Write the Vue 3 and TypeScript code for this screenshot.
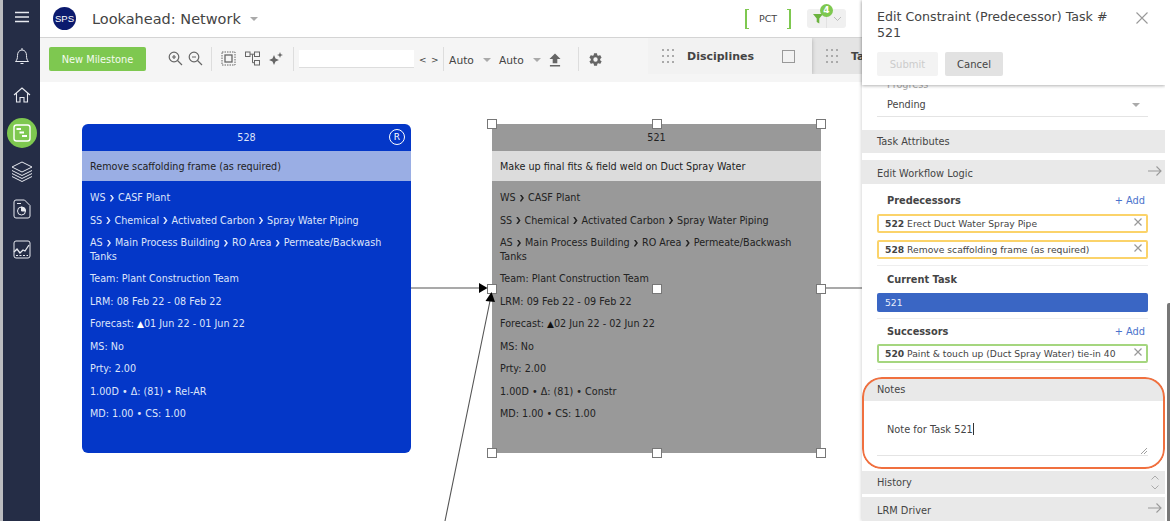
<script setup lang="ts">
interface TaskNode {
  id: string
  title: string
  lines: string[][]
  forecast: string
  lrm: string
  last: string
  selected: boolean
}

const handles = [
  [0, 0], [50, 0], [100, 0],
  [0, 50], [50, 50], [100, 50],
  [0, 100], [50, 100], [100, 100],
]

const paths = [
  ['WS', 'CASF Plant'],
  ['SS', 'Chemical', 'Activated Carbon', 'Spray Water Piping'],
  ['AS', 'Main Process Building', 'RO Area', 'Permeate/Backwash Tanks'],
]

const nodes: TaskNode[] = [
  {
    id: '528',
    title: 'Remove scaffolding frame (as required)',
    lines: paths,
    lrm: 'LRM: 08 Feb 22 - 08 Feb 22',
    forecast: '01 Jun 22 - 01 Jun 22',
    last: '1.00D • Δ: (81) • Rel-AR',
    selected: false,
  },
  {
    id: '521',
    title: 'Make up final fits & field weld on Duct Spray Water',
    lines: paths,
    lrm: 'LRM: 09 Feb 22 - 09 Feb 22',
    forecast: '02 Jun 22 - 02 Jun 22',
    last: '1.00D • Δ: (81) • Constr',
    selected: true,
  },
]
</script>

<template>
  <div class="app">
    <div class="edge"></div>
    <nav class="rail">
      <svg class="rail-menu" width="16" height="12" viewBox="0 0 16 12"><path d="M1 1.5h14M1 6h14M1 10.500h14" stroke="#e8eaf0" stroke-width="1.600" fill="none" /></svg>
      <svg class="rail-icon bell" width="16" height="20" viewBox="0 0 16 20" fill="none" stroke="#e8eaf0" stroke-width="1"><path d="M1.500 14.500c1.500-1.500 2-3 2-6s1.500-5.500 4.500-5.500 4.500 2.500 4.500 5.500.5 4.500 2 6zM8 1v2M6.500 16.500h3" /></svg>
      <svg class="rail-icon home" width="18" height="16" viewBox="0 0 18 16" fill="none" stroke="#e8eaf0" stroke-width="1.100"><path d="M1 8l8-7 8 7M3.500 6.500V15h3.500v-4.500h4V15h3.500V6.500" /></svg>
      <div class="rail-active">
        <svg width="20" height="20" viewBox="0 0 20 20" fill="none" stroke="#fff" stroke-width="1.400"><rect x="2" y="2" width="16" height="16" rx="2.500" /><path d="M4.500 6h4.500M7.500 9.500h4.500M10 13h5" stroke-width="1.800" /></svg>
      </div>
      <svg class="rail-icon layers" width="24" height="22" viewBox="0 0 24 22" fill="none" stroke="#e8eaf0" stroke-width="1"><path d="M12 1l10 5-10 5L2 6zM2 9.500l10 5 10-5M2 12.500l10 5 10-5M2 15.500l10 5 10-5" /></svg>
      <svg class="rail-icon report" width="18" height="20" viewBox="0 0 18 20" fill="none" stroke="#e8eaf0" stroke-width="1"><path d="M3 1h8.500L17 6.500V17a2 2 0 0 1-2 2H3a2 2 0 0 1-2-2V3a2 2 0 0 1 2-2z" /><circle cx="8.500" cy="12" r="4" /><path d="M4 4.500h4" /><path d="M8.500 12V8a4 4 0 0 1 4 4z" fill="#e8eaf0" /></svg>
      <svg class="rail-icon chart" width="18" height="19" viewBox="0 0 18 19" fill="none" stroke="#e8eaf0" stroke-width="1"><rect x="1" y="1" width="16" height="17" rx="2" /><path d="M1 12l3-3 3 4 3-3 2 1 4-6" stroke-width="1.300" /><path d="M3 15.500h12" stroke-dasharray="2 1.500" /></svg>
    </nav>

    <main class="main">
      <header class="topbar">
        <div class="logo">SPS</div>
        <div class="page-title">Lookahead: Network</div>
        <span class="caret title-caret"></span>
        <div class="spacer"></div>
        <div class="pct">PCT</div>
        <div class="filter">
          <svg width="10" height="11" viewBox="0 0 10 11"><path d="M0 1h10L6.300 5.500V10.500L3.700 9V5.500z" fill="#6cb33f" /></svg>
          <span class="filter-badge">4</span>
          <i class="filter-sep"></i>
          <svg width="9" height="6" viewBox="0 0 9 6"><path d="M1 1l3.500 3.500L8 1" stroke="#bbb" fill="none" /></svg>
        </div>
      </header>

      <div class="toolbar">
        <button class="milestone">New Milestone</button>
        <svg class="tool first" width="15" height="15" viewBox="0 0 15 15" fill="none" stroke="#666" stroke-width="1.200"><circle cx="6" cy="6" r="4.800" /><path d="M9.500 9.500L14 14M4 6h4M6 4v4" /></svg>
        <svg class="tool" width="15" height="15" viewBox="0 0 15 15" fill="none" stroke="#666" stroke-width="1.200"><circle cx="6" cy="6" r="4.800" /><path d="M9.500 9.500L14 14M4 6h4" /></svg>
        <i class="tool-sep sep-zoom"></i>
        <svg class="tool" width="15" height="15" viewBox="0 0 15 15" fill="none" stroke="#666"><rect x="1" y="1" width="13" height="13" stroke-dasharray="1.500 1" /><rect x="4" y="4" width="7" height="7" stroke-width="1.300" /></svg>
        <svg class="tool graph" width="15" height="15" viewBox="0 0 15 15" fill="none" stroke="#666"><rect x="0.500" y="1" width="4.500" height="4.500" /><rect x="9.500" y="1" width="5" height="4.500" /><rect x="9.500" y="9.500" width="5" height="4.500" /><path d="M5 3.200h4.500M7.500 3.200v8.500h2" /></svg>
        <svg class="tool spark" width="14" height="14" viewBox="0 0 14 14" fill="#666"><path d="M5 3l1.500 3.500L10 8 6.500 9.500 5 13 3.500 9.500 0 8l3.500-1.500zM11 0l.8 2.200L14 3l-2.200.8L11 6l-.8-2.200L8 3l2.200-.8z" /></svg>
        <i class="tool-sep sep-tools"></i>
        <div class="search"></div>
        <span class="pager">&lt;</span>
        <span class="pager">&gt;</span>
        <i class="tool-sep sep-pager"></i>
        <span class="auto">Auto</span><span class="caret"></span>
        <span class="auto">Auto</span><span class="caret"></span>
        <svg class="upload" width="12" height="14" viewBox="0 0 13 14" fill="#666"><path d="M6.500 0L12.500 6H9v4.500H4V6H.5zM1 12.500h11V14H1z" /></svg>
        <i class="tool-sep sep-gear"></i>
        <svg class="gear" width="15" height="15" viewBox="0 0 24 24"><path fill="#666" d="M19.400 13c.04-.33.1-.66.1-1s-.06-.67-.1-1l2.100-1.650c.2-.15.25-.42.12-.64l-2-3.460c-.12-.22-.39-.3-.61-.22l-2.490 1c-.52-.4-1.080-.73-1.690-.98l-.38-2.650A.5.500 0 0 0 14 2h-4a.5.500 0 0 0-.5.420l-.38 2.650c-.61.250-1.170.590-1.690.98l-2.490-1a.5.500 0 0 0-.61.220l-2 3.460c-.13.220-.07.490.12.640L4.600 11c-.04.330-.1.660-.1 1s.06.670.1 1l-2.100 1.650c-.2.150-.25.420-.12.640l2 3.460c.12.220.39.300.61.220l2.490-1c.52.400 1.080.730 1.690.980l.38 2.650c.03.240.24.420.5.420h4c.26 0 .47-.18.500-.42l.38-2.650c.61-.25 1.170-.59 1.690-.98l2.490 1c.23.090.49 0 .61-.22l2-3.460c.12-.22.07-.49-.12-.64zM12 15.500a3.500 3.500 0 1 1 0-7 3.500 3.500 0 0 1 0 7z" /></svg>
      </div>

      <div class="dock">
        <div class="dock-tab">
          <span class="grip"><i v-for="n in 9" :key="n"></i></span>
          <b>Disciplines</b>
          <span class="check"></span>
        </div>
        <div class="dock-tab off">
          <span class="grip"><i v-for="n in 9" :key="n"></i></span>
          <b>Tasks</b>
        </div>
      </div>

      <section class="canvas">
        <article
          v-for="node in nodes"
          :key="node.id"
          class="node"
          :class="{ selected: node.selected }"
        >
          <div class="node-id">
            {{ node.id }}
            <span v-if="!node.selected" class="node-badge">R</span>
          </div>
          <div class="node-title">{{ node.title }}</div>
          <div class="node-body">
            <p v-for="line in node.lines" :key="line[0]">
              <template v-for="(part, i) in line" :key="part">
                <i v-if="i" class="chev"></i>{{ part }}
              </template>
            </p>
            <p>Team: Plant Construction Team</p>
            <p>{{ node.lrm }}</p>
            <p>Forecast: <span class="tri">▲</span>{{ node.forecast }}</p>
            <p>MS: No</p>
            <p>Prty: 2.00</p>
            <p>{{ node.last }}</p>
            <p>MD: 1.00 • CS: 1.00</p>
          </div>
          <template v-if="node.selected">
            <span
              v-for="h in handles"
              :key="h.join()"
              class="handle"
              :style="{ left: h[0] + '%', top: h[1] + '%' }"
            ></span>
          </template>
        </article>
        <svg class="wires" width="822" height="439" viewBox="0 0 822 439" fill="none" stroke="#555" stroke-width="1.100">
          <path d="M371 206H441M786 206H822M405 439L451 214" />
          <path d="M439 201L447.500 206L439 211z" fill="#000" stroke="none" />
          <path d="M445.500 219L451.500 210L455 220z" fill="#000" stroke="none" />
        </svg>
      </section>
    </main>

    <aside class="panel">
      <div class="panel-head">
        <div class="panel-title">Edit Constraint (Predecessor) Task # 521</div>
        <svg class="panel-close" width="12" height="12" viewBox="0 0 12 12"><path d="M.5.500l11 11M11.500.500l-11 11" stroke="#999" stroke-width="1.100" /></svg>
        <div class="panel-btns">
          <button class="btn ghost">Submit</button>
          <button class="btn">Cancel</button>
        </div>
      </div>
      <div class="panel-body">
        <div class="progress">
          <div class="progress-label">Progress</div>
          <div class="progress-row"><span>Pending</span><span class="caret"></span></div>
        </div>
        <div class="band attrs">Task Attributes</div>
        <div class="band logic">
          Edit Workflow Logic
          <svg class="arrow" width="14" height="10" viewBox="0 0 14 10" fill="none" stroke="#999" stroke-width="1.100"><path d="M0 5h13M8.500.500L13 5 8.500 9.500" /></svg>
        </div>

        <div class="group">
          <div class="group-head head-pred"><b>Predecessors</b><span class="add">+ Add</span></div>
          <div class="chip pred">
            <b>522</b> Erect Duct Water Spray Pipe
            <svg class="x" width="8" height="8" viewBox="0 0 8 8"><path d="M.5.500l7 7M7.500.500l-7 7" stroke="#999" stroke-width="1.200" /></svg>
          </div>
          <div class="chip pred">
            <b>528</b> Remove scaffolding frame (as required)
            <svg class="x" width="8" height="8" viewBox="0 0 8 8"><path d="M.5.500l7 7M7.500.500l-7 7" stroke="#999" stroke-width="1.200" /></svg>
          </div>
        </div>
        <div class="group">
          <div class="group-head head-current"><b>Current Task</b></div>
          <div class="chip current">521</div>
        </div>
        <div class="group">
          <div class="group-head head-succ"><b>Successors</b><span class="add">+ Add</span></div>
          <div class="chip succ">
            <b>520</b> Paint &amp; touch up (Duct Spray Water) tie-in 40
            <svg class="x" width="8" height="8" viewBox="0 0 8 8"><path d="M.5.500l7 7M7.500.500l-7 7" stroke="#999" stroke-width="1.200" /></svg>
          </div>
        </div>

        <div class="notes">
          <div class="band notes-band">Notes</div>
          <div class="notes-field">
            <span>Note for Task 521<i class="cursor"></i></span>
            <svg class="resize" width="6" height="6" viewBox="0 0 6 6"><path d="M0 6l6-6M3 6l3-3" stroke="#888" stroke-width=".8" /></svg>
          </div>
        </div>
        <div class="band history">
          History
          <svg class="updown" width="8" height="15" viewBox="0 0 8 15" fill="none" stroke="#aaa"><path d="M.5 4.500L4 1l3.500 3.500M.5 10.500L4 14l3.500-3.500" /></svg>
        </div>
        <div class="band driver">
          LRM Driver
          <svg class="arrow" width="14" height="10" viewBox="0 0 14 10" fill="none" stroke="#999" stroke-width="1.100"><path d="M0 5h13M8.500.500L13 5 8.500 9.500" /></svg>
        </div>
      </div>
    </aside>
    <div class="scroll"><div class="thumb"></div></div>
  </div>
</template>

<style>
html, body { margin: 0; background: #fff; }
</style>

<style scoped>
.app {
  display: flex;
  position: relative;
  width: 1170px;
  height: 521px;
  overflow: hidden;
  font-family: "DejaVu Sans", Verdana, sans-serif;
  color: #333;
  background: #fff;
}
.edge { width: 3px; background: #bbbcc0; flex: none; }
.rail {
  width: 37px;
  flex: none;
  background: #252d46;
  display: flex;
  flex-direction: column;
  align-items: center;
}
.rail svg { flex: none; }
.rail-menu { margin-top: 11px; }
.bell { margin-top: 24px; }
.home { margin-top: 20px; }
.rail-active {
  width: 30px;
  height: 30px;
  margin-top: 15px;
  border-radius: 50%;
  background: #7ec850;
  display: flex;
  align-items: center;
  justify-content: center;
}
.layers { margin-top: 13px; }
.report { margin-top: 16px; }
.chart { margin-top: 21px; }

.main { flex: 1; display: flex; flex-direction: column; position: relative; min-width: 0; }
.topbar {
  height: 38px;
  flex: none;
  box-sizing: border-box;
  display: flex;
  align-items: center;
  background: #fff;
  border-bottom: 1px solid #d4d4d4;
  padding-left: 13px;
}
.logo {
  width: 23px;
  height: 23px;
  border-radius: 50%;
  background: #0b1a6e;
  color: #fff;
  font: 9.500px/23px "Liberation Sans", Arial, sans-serif;
  text-align: center;
}
.page-title { margin-left: 16px; font-size: 14.500px; color: #444; }
.caret {
  display: inline-block;
  width: 0;
  height: 0;
  border-left: 4px solid transparent;
  border-right: 4px solid transparent;
  border-top: 4px solid #aaa;
}
.title-caret { margin-left: 9px; }
.spacer { flex: 1; }
.pct {
  width: 46px;
  height: 20px;
  box-sizing: border-box;
  margin-right: 16px;
  border-left: 2px solid #7ec850;
  border-right: 2px solid #7ec850;
  background:
    linear-gradient(#7ec850, #7ec850) left top / 2px 1px no-repeat,
    linear-gradient(#7ec850, #7ec850) right top / 2px 1px no-repeat,
    linear-gradient(#7ec850, #7ec850) left bottom / 2px 1px no-repeat,
    linear-gradient(#7ec850, #7ec850) right bottom / 2px 1px no-repeat;
  text-align: center;
  font-size: 9.500px;
  line-height: 20px;
  color: #444;
}
.filter {
  width: 39px;
  height: 19px;
  margin-right: 16px;
  background: #f0f0f0;
  border-radius: 3px;
  display: flex;
  align-items: center;
  position: relative;
  padding-left: 6px;
  box-sizing: border-box;
}
.filter-badge {
  position: absolute;
  left: 13px;
  top: -5px;
  width: 13px;
  height: 13px;
  border-radius: 50%;
  background: #7ec850;
  color: #fff;
  font-size: 9px;
  font-weight: 700;
  line-height: 13px;
  text-align: center;
}
.filter-sep { width: 1px; height: 19px; background: #e2e2e2; margin: 0 6px 0 3px; }

.toolbar {
  height: 44px;
  flex: none;
  background: #f5f5f5;
  display: flex;
  align-items: center;
  padding-left: 9px;
}
.milestone {
  width: 97px;
  height: 24px;
  background: #7ec850;
  border: 0;
  border-radius: 2px;
  color: #f4fbef;
  font: 9.800px "DejaVu Sans", Verdana, sans-serif;
  padding: 0;
  margin-top: -2px;
}
.tool { margin-top: -3px; margin-left: 5px; flex: none; }
.tool.first { margin-left: 22px; }
.tool.graph { margin-left: 9px; }
.tool.spark { margin-left: 9px; }
.tool-sep { width: 1px; height: 24px; background: #ddd; flex: none; margin-top: -2px; }
.sep-zoom { margin-left: 8px; margin-right: 4px; }
.sep-tools { margin-left: 10px; margin-right: 3px; }
.search { width: 115px; height: 18px; background: #fff; border-bottom: 1px solid #ddd; box-sizing: border-box; margin: -2px 5px 0 2px; }
.pager { font-size: 9px; color: #444; margin-right: 4.500px; flex: none; }
.sep-pager { margin-right: 5px; }
.auto { font-size: 10.700px; color: #444; }
.auto + .caret { margin: 0 8px 0 9px; }
.upload { flex: none; }
.sep-gear { margin: -2px 9px 0 17px; }
.gear { margin-top: -2px; }

.dock {
  position: absolute;
  left: 608px;
  top: 38px;
  display: flex;
  height: 36px;
  width: 214px;
  overflow: hidden;
  z-index: 2;
}
.dock-tab {
  flex: none;
  width: 164px;
  background: #f2f2f2;
  display: flex;
  align-items: center;
  padding-left: 14px;
  box-sizing: border-box;
  box-shadow: 0 1px 4px rgba(0, 0, 0, .25);
  position: relative;
  z-index: 1;
  font-size: 11px;
  color: #444;
}
.dock-tab.off { width: 60px; background: #e4e4e4; box-shadow: none; z-index: 0; }
.grip {
  display: grid;
  grid-template-columns: repeat(3, 2px);
  gap: 4px 3px;
  margin-right: 13px;
}
.grip i { width: 2px; height: 2px; background: #aaa; }
.check { width: 11px; height: 11px; border: 1.500px solid #999; margin-left: 28px; }

.canvas { flex: 1; position: relative; background: #fff; }
.wires { position: absolute; left: 0; top: 0; }
.node {
  position: absolute;
  top: 42px;
  left: 42px;
  width: 329px;
  height: 329px;
  background: #0437c8;
  color: #dde4fa;
  font-size: 9.650px;
  border-radius: 6px;
  display: flex;
  flex-direction: column;
}
.node.selected { left: 452px; background: #999; color: #222; border-radius: 0; }
.node-id { height: 27px; line-height: 27px; text-align: center; position: relative; }
.node-badge {
  position: absolute;
  right: 6px;
  top: 5px;
  width: 14px;
  height: 14px;
  border: 1px solid #fff;
  border-radius: 50%;
  line-height: 14px;
  color: #fff;
  font-size: 9px;
}
.node-title {
  height: 30px;
  line-height: 31px;
  padding-left: 8px;
  background: #9aaee4;
  color: #222;
}
.selected .node-title { background: #dcdcdc; }
.node-body { padding: 10px 8px 0; }
.node-body p { margin: 0 0 9px; line-height: 13.500px; }
.chev {
  display: inline-block;
  width: 4.300px;
  height: 7px;
  margin: 0 4px;
  vertical-align: -.5px;
  background: currentColor;
  clip-path: polygon(0 0, 40% 0, 100% 50%, 40% 100%, 0 100%, 55% 50%);
}
.tri { font-size: 9px; line-height: 0; color: #fff; }
.node.selected .tri { color: #111; }
.handle {
  position: absolute;
  width: 8px;
  height: 8px;
  margin: -5px 0 0 -5px;
  background: #fff;
  border: 1px solid #777;
}

.panel {
  width: 303px;
  flex: none;
  position: relative;
  background: #fff;
  box-shadow: -1px 0 3px rgba(0, 0, 0, .15);
  z-index: 3;
  display: flex;
  flex-direction: column;
}
.panel-head {
  height: 85px;
  flex: none;
  padding: 9px 15px 0;
  box-sizing: border-box;
  position: relative;
  z-index: 1;
  background: #fff;
  box-shadow: 0 1px 3px rgba(0, 0, 0, .3);
}
.panel-title { width: 240px; font-size: 12.650px; line-height: 16px; color: #444; }
.panel-close { position: absolute; right: 17px; top: 12px; }
.panel-btns { display: flex; gap: 7px; margin-top: 11px; }
.btn {
  height: 24px;
  width: 58px;
  border: 0;
  border-radius: 2px;
  background: #e2e2e2;
  color: #444;
  padding: 0;
  font: 10px "DejaVu Sans", Verdana, sans-serif;
}
.btn.ghost { width: 61px; background: #f3f3f3; color: #ccc; }
.panel-body { flex: 1; min-height: 0; overflow: hidden; }
.progress { height: 32px; margin: 0 17px 0 15px; border-bottom: 1px solid #e4e4e4; box-sizing: border-box; position: relative; font-size: 9.700px; }
.progress-label { position: absolute; left: 10px; top: -6px; color: #aaa; }
.progress-row { position: absolute; top: 14px; left: 10px; right: 8px; display: flex; justify-content: space-between; align-items: center; color: #444; }
.band {
  height: 24px;
  line-height: 24px;
  padding-left: 15px;
  background: #e9e9e9;
  font-size: 9.800px;
  color: #444;
  position: relative;
}
.attrs { margin-top: 13px; height: 23px; line-height: 23px; }
.logic { margin-top: 7px; line-height: 27px; }
.arrow { position: absolute; right: 3px; top: 6px; }
.group { margin: 0 17px 0 15px; padding-bottom: 6px; border-bottom: 1px solid #eee; }
.group-head {
  padding: 0 3px 0 10px;
  display: flex;
  align-items: center;
  justify-content: space-between;
  font-size: 9.800px;
  color: #444;
}
.head-pred { height: 30px; box-sizing: border-box; padding-top: 3px; }
.head-current { height: 27px; }
.head-succ { height: 25px; }
.add { color: #4a73cc; }
.chip {
  height: 19px;
  box-sizing: border-box;
  line-height: 15px;
  padding-left: 6px;
  border-radius: 2px;
  font-size: 9.200px;
  color: #444;
  position: relative;
  margin-bottom: 7px;
}
.group .chip:last-child { margin-bottom: 0; }
.chip.pred { border: 2px solid #fbd36a; }
.chip.succ { border: 2px solid #a5d67f; }
.chip.current { background: #3a66c4; color: #e8eefb; line-height: 19px; padding-left: 8px; }
.x { position: absolute; right: 4px; top: 2px; }
.notes {
  position: relative;
  margin-top: 7px;
  height: 92px;
  box-sizing: border-box;
  border-radius: 20px;
  overflow: hidden;
}
.notes::after {
  content: "";
  position: absolute;
  left: 0;
  right: 0;
  top: 0;
  bottom: 0;
  border: 2px solid #f0703f;
  border-radius: 20px;
}
.notes-band { line-height: 26px; }
.notes-field {
  height: 55px;
  margin: 0 17px 0 15px;
  padding: 22px 0 0 10px;
  box-sizing: border-box;
  border-bottom: 1px solid #e4e4e4;
  font-size: 9.800px;
  position: relative;
  color: #444;
}
.cursor { display: inline-block; width: 1px; height: 12px; background: #333; vertical-align: -2px; }
.resize { position: absolute; right: 1px; bottom: 1px; }
.history { margin-top: 2px; height: 23px; line-height: 23px; }
.updown { position: absolute; right: 6px; top: 4px; }
.driver { margin-top: 3px; line-height: 27px; }
.scroll { width: 5px; flex: none; background: #fff; position: relative; z-index: 4; }
.thumb { position: absolute; right: 0; top: 303px; width: 3px; bottom: 0; background: #777; border-radius: 2px 0 0 0; }
</style>
